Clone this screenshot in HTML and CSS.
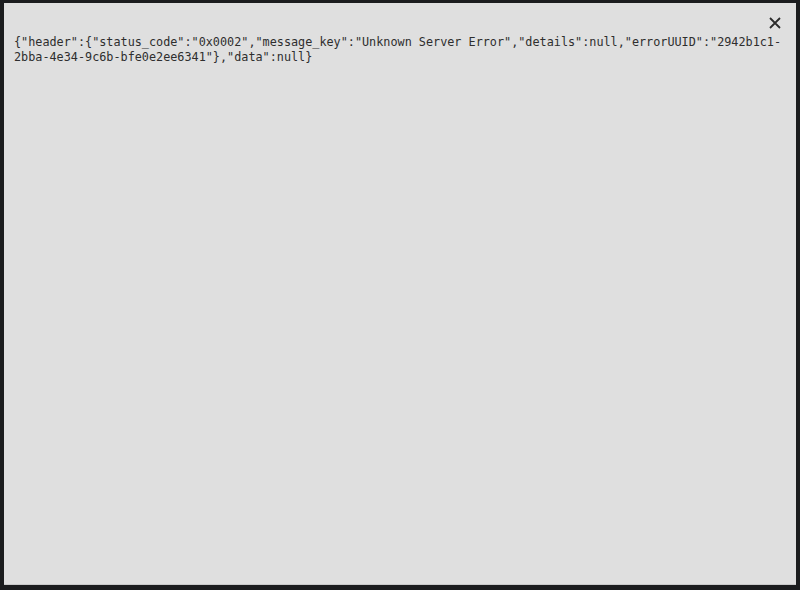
FILE: index.html
```html
<!DOCTYPE html>
<html lang="en">
<head>
  <meta charset="UTF-8">
  <title>Error</title>
  <link rel="stylesheet" href="styles.css">
</head>
<body>
  <div class="modal">
    <div class="modal-head">
      <button class="close" title="Close">
        <svg width="14" height="14" viewBox="0 0 14 14">
          <path d="M2 2 L12 12 M12 2 L2 12" stroke="#2b2b2b" stroke-width="1.8" fill="none"/>
        </svg>
      </button>
    </div>
    <div class="modal-body">
      <div class="response">{"header":{"status_code":"0x0002","message_key":"Unknown Server Error","details":null,"errorUUID":"2942b1c1-<wbr>2bba-4e34-9c6b-bfe0e2ee6341"},"data":null}</div>
    </div>
  </div>
</body>
</html>
```

FILE: styles.css
```css
html, body {
  height: 100%;
}

body {
  margin: 0;
  background-color: #1b1c1e;
  font-family: "Liberation Sans", Arial, sans-serif;
  padding: 3px 4px 5px 4px;
  box-sizing: border-box;
}

.modal {
  background-color: #dfdfdf;
  height: 100%;
  display: flex;
  flex-direction: column;
  border-bottom: 1px solid #c9c9c9;
  box-sizing: border-box;
}

.modal-head {
  display: flex;
  justify-content: flex-end;
  height: 32px;
  padding: 13px 14px 0 0;
  box-sizing: border-box;
}

.close {
  width: 14px;
  height: 14px;
  padding: 0;
  border: none;
  background: none;
  cursor: pointer;
  display: flex;
}

.modal-body {
  padding: 0 10px;
}

.response {
  font-family: "DejaVu Sans Mono", "Liberation Mono", monospace;
  font-size: 11.8px;
  line-height: 15px;
  color: #2e2e2e;
}
```
